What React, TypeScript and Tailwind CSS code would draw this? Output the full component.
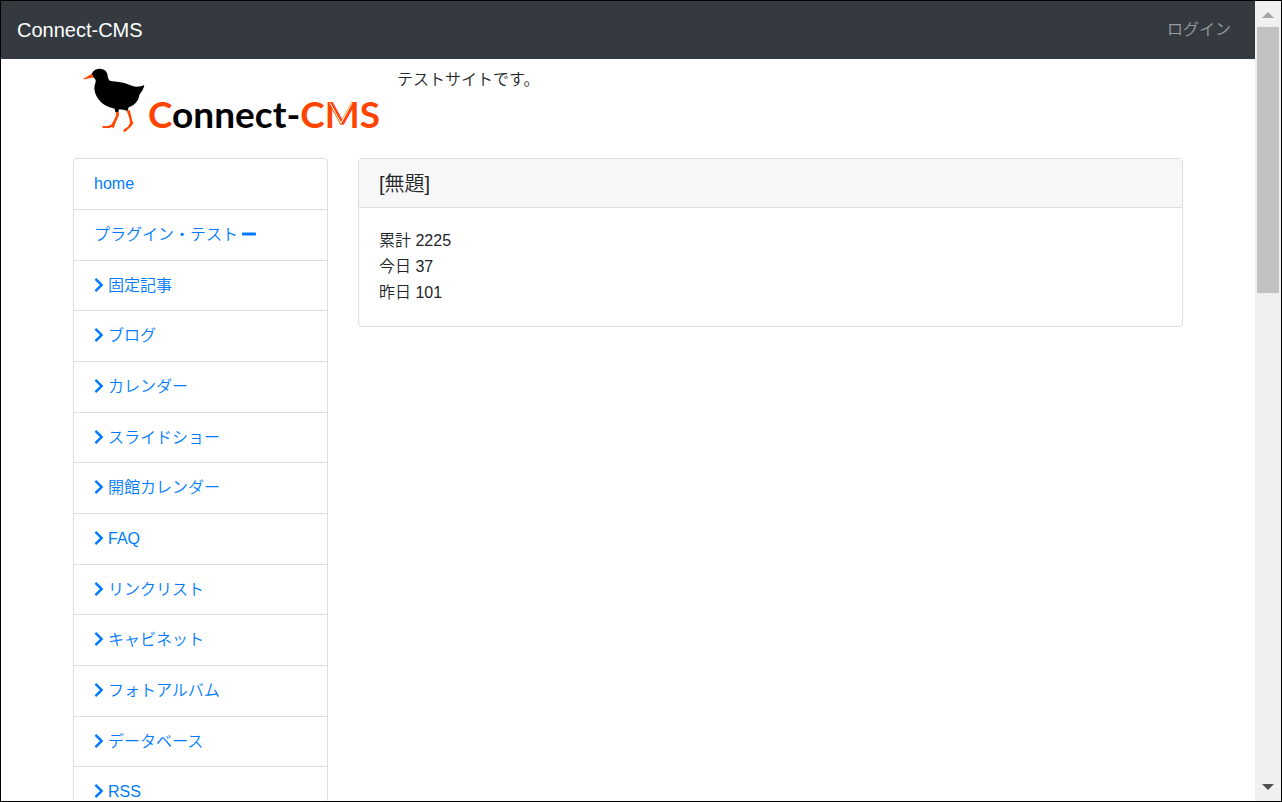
import { FaChevronRight, FaMinus } from "react-icons/fa";

interface Page {
  name: string;
  isChild?: boolean;
  isOpen?: boolean;
}

const pages: Page[] = [
  { name: "home" },
  { name: "プラグイン・テスト", isOpen: true },
  { name: "固定記事", isChild: true },
  { name: "ブログ", isChild: true },
  { name: "カレンダー", isChild: true },
  { name: "スライドショー", isChild: true },
  { name: "開館カレンダー", isChild: true },
  { name: "FAQ", isChild: true },
  { name: "リンクリスト", isChild: true },
  { name: "キャビネット", isChild: true },
  { name: "フォトアルバム", isChild: true },
  { name: "データベース", isChild: true },
  { name: "RSS", isChild: true },
];

const counts = [
  { label: "累計", value: 2225 },
  { label: "今日", value: 37 },
  { label: "昨日", value: 101 },
];

function Logo() {
  return (
    <svg
      viewBox="0 1 300 70"
      className="h-[70px] w-[300px] shrink-0"
      role="img"
      aria-label="Connect-CMS"
    >
      {/* bird */}
      <g transform="scale(0.3333) translate(-33 -33)">
        <path
          d="M65 57 C69 46 78 41 90 41 C104 42 112 50 113 62 C114 70 116 75 121 78 C140 80 155 80 172 87 C182 91 190 95 200 95 C209 95 216 93 223 90 C221 101 215 110 208 120 C206 138 193 151 176 157 L173 168 L160 164 L147 163 L145 171 L136 171 L134 161 C113 157 96 147 85 132 C74 117 70 99 76 84 C79 77 77 72 71 68 Z"
          fill="#000"
        />
        <path d="M66 56 L39 72 L45 73 L71 67 Z" fill="#ff4500" />
        <path
          d="M137 171 L146 171 L147 181 L135 207 L132 219 L125 216 L119 219 L99 219 L95 214 L116 213 L125 208 L139 181 Z"
          fill="#ff4500"
        />
        <path
          d="M170 167 L179 165 L187 198 L190 204 L184 214 L165 231 L159 228 L163 222 L174 215 L180 204 L178 190 Z"
          fill="#ff4500"
        />
      </g>
      <text
        x="67"
        y="62"
        className="fill-black font-['Lato',sans-serif] text-[37px] font-bold"
      >
        <tspan className="fill-[#ff4500]">C</tspan>onnect-
        <tspan className="fill-[#ff4500]">CMS</tspan>
      </text>
      {/* thin lines cut into the M */}
      <path d="M249 37 L260 57 L271 37" fill="none" stroke="#fff" strokeWidth="1" />
    </svg>
  );
}

function Navbar() {
  return (
    <nav className="flex items-center justify-between bg-[#343a40] px-4 py-[14px]">
      <a href="#" className="text-[20px] leading-[30px] text-white">
        Connect-CMS
      </a>
      <a href="#" className="px-2 leading-[26px] text-white/50">
        ログイン
      </a>
    </nav>
  );
}

function SideMenu() {
  return (
    <ul className="rounded border border-[#dfdfdf]">
      {pages.map((page) => (
        <li
          key={page.name}
          className="border-b border-[#dfdfdf] px-5 py-3 leading-[26px] last:border-b-0 nth-[3n]:leading-[25px]"
        >
          <a href="#" className="flex items-start gap-1 text-[#007bff]">
            {page.isChild && <FaChevronRight className="h-6 w-[10px]" />}
            {page.name}
            {page.isOpen && <FaMinus className="h-6 w-[14px]" />}
          </a>
        </li>
      ))}
    </ul>
  );
}

function CounterCard() {
  return (
    <section className="rounded border border-[#dfdfdf]">
      <h2 className="border-b border-[#dfdfdf] bg-[#f7f7f7] px-5 pt-3 pb-[10px] text-[20px] leading-[26px]">
        [無題]
      </h2>
      <div className="p-5 leading-[26px]">
        {counts.map((count) => (
          <p key={count.label}>
            {count.label} {count.value}
          </p>
        ))}
      </div>
    </section>
  );
}

function ScrollTrack() {
  return (
    <div className="flex w-[26px] shrink-0 flex-col items-center bg-[#f0f0f0]" aria-hidden="true">
      <svg viewBox="0 0 26 26" className="h-[26px] w-[26px] shrink-0">
        <path d="M7 17 L13 11 L19 17 Z" fill="#a3a3a3" />
      </svg>
      <div className="flex w-[22px] flex-1 flex-col">
        <div className="h-[266px] bg-[#c1c1c1]" />
      </div>
      <svg viewBox="0 0 26 26" className="h-[26px] w-[26px] shrink-0">
        <path d="M7 9 L13 15 L19 9 Z" fill="#505050" />
      </svg>
    </div>
  );
}

export default function App() {
  return (
    <div className="flex h-screen overflow-hidden border border-black bg-white font-['Liberation_Sans','Noto_Sans_CJK_JP',sans-serif] text-base font-[350] text-[#212529]">
      <div className="flex-1 overflow-hidden">
        <Navbar />
        <div className="mx-auto max-w-[1140px] px-[15px]">
          <header className="flex gap-4 px-2 pt-2 pb-[21px]">
            <Logo />
            <p className="leading-[26px]">テストサイトです。</p>
          </header>
          <div className="-mx-[15px] grid grid-cols-[1fr_3fr] items-start">
            <aside className="px-[15px]">
              <SideMenu />
            </aside>
            <main className="px-[15px]">
              <CounterCard />
            </main>
          </div>
        </div>
      </div>
      <ScrollTrack />
    </div>
  );
}
